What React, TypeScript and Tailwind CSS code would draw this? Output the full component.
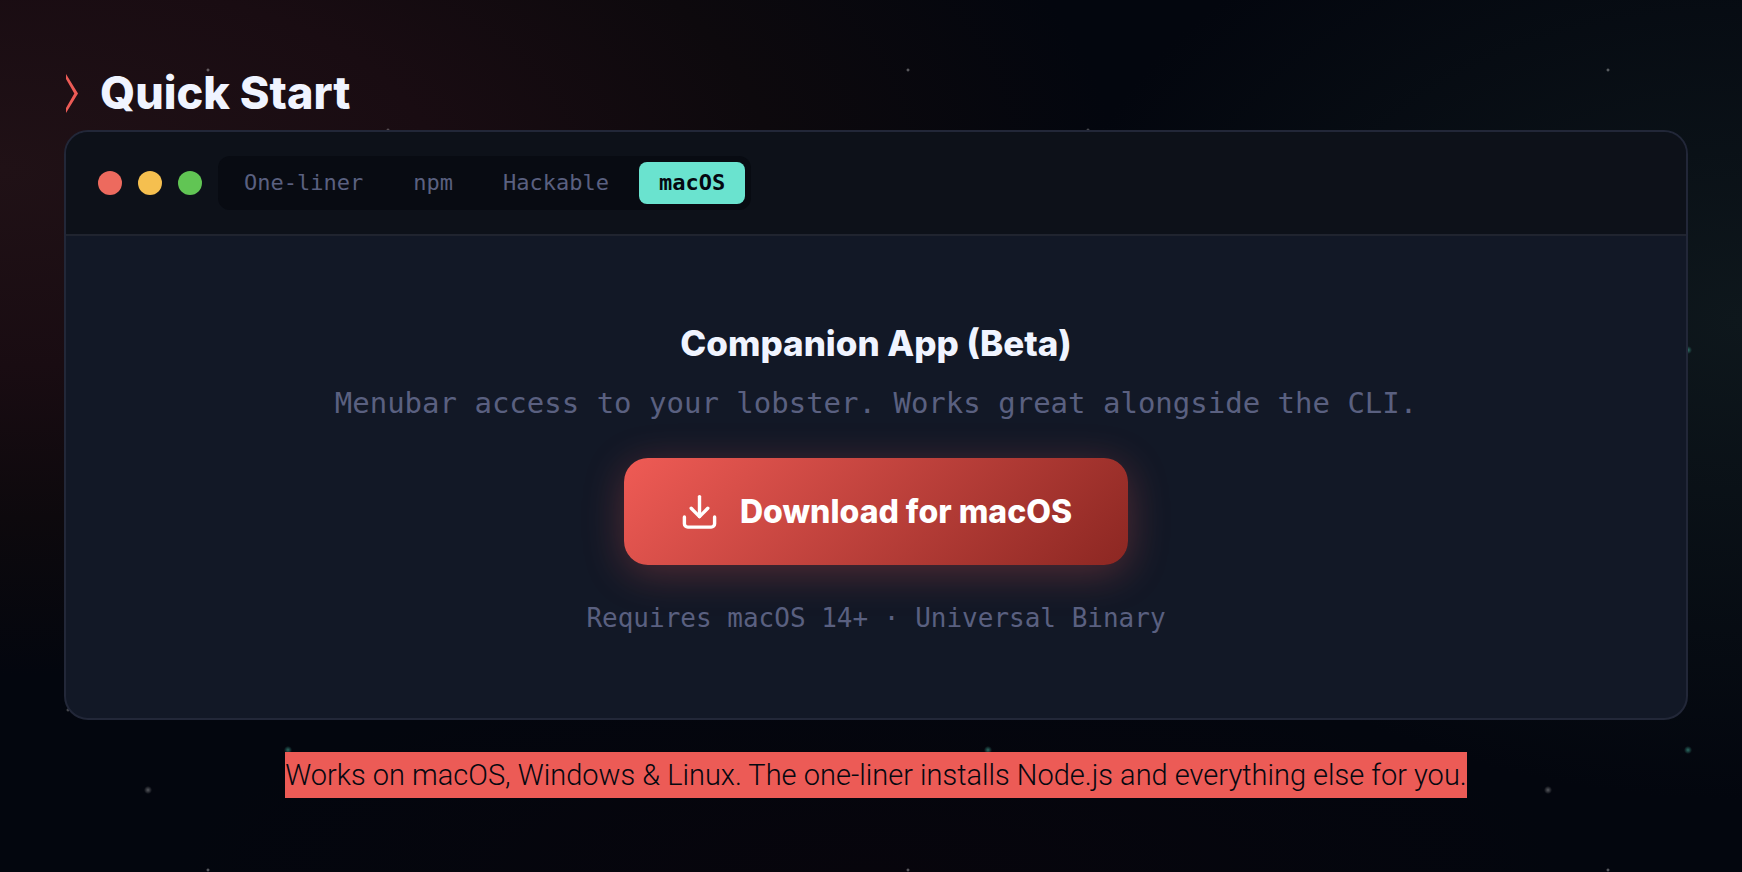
import { useState } from "react";

const tabs = ["One-liner", "npm", "Hackable", "macOS"];

function ChevronMark() {
  return (
    <svg aria-hidden="true" viewBox="0 0 14 40" className="h-10 w-[14px] shrink-0" fill="#ec5b56">
      <path d="M2 1L14 20.500L2 40V35L10.300 20.500L2 6Z" />
    </svg>
  );
}

function DownloadIcon() {
  return (
    <svg
      aria-hidden="true"
      viewBox="0 0 40 40"
      className="size-10 shrink-0"
      fill="none"
      stroke="currentColor"
      strokeWidth="3.4"
      strokeLinecap="round"
      strokeLinejoin="round"
    >
      <path d="M19.500 4.600v20" />
      <path d="M11.200 16.300l8.300 8.300 8.300-8.300" />
      <path d="M4.400 25v6.700a3.400 3.400 0 0 0 3.400 3.400h23.400a3.400 3.400 0 0 0 3.400-3.400v-6.700" />
    </svg>
  );
}

export default function App() {
  const [active, setActive] = useState("macOS");

  return (
    <main className="relative isolate min-h-screen overflow-hidden bg-[#03060e] pt-[69px] pr-[54px] pb-[72px] pl-16">
      <div
        aria-hidden="true"
        className="absolute inset-0 -z-10 bg-[radial-gradient(ellipse_1240px_560px_at_0px_170px,#201116_0%,#190c12_35%,#0d090d_62%,transparent_90%),radial-gradient(ellipse_700px_480px_at_100%_320px,#0e171c_0%,transparent_100%),radial-gradient(ellipse_700px_200px_at_50%_100%,#07050c_0%,transparent_100%)]"
      />
      <div
        aria-hidden="true"
        className="absolute inset-0 -z-10 bg-[length:700px_400px] bg-[image:radial-gradient(circle_at_208px_70px,#ffffff80,transparent_2px),radial-gradient(circle_at_388px_130px,#ffffff66,transparent_2px),radial-gradient(circle_at_288px_350px,#3f9d8caa,transparent_4px),radial-gradient(circle_at_68px_310px,#ffffff66,transparent_2px),radial-gradient(circle_at_148px_390px,#ffffff55,transparent_4px)]"
      />

      <section aria-labelledby="quick-start" className="flex flex-col">
        <h2
          id="quick-start"
          className="flex items-center gap-[22px] font-['Inter',sans-serif] text-[45px] leading-[48px] font-extrabold text-[#f0f4ff]"
        >
          <ChevronMark />
          Quick Start
        </h2>

        <div className="mt-[13px] overflow-hidden rounded-3xl border-2 border-[#222738] bg-[#121826]">
          <div className="flex items-center gap-4 border-b-2 border-[#20242f] bg-[#0d1119] px-8 py-6">
            <div className="flex gap-4" aria-hidden="true">
              <span className="size-6 rounded-full bg-[#ed6a5e]" />
              <span className="size-6 rounded-full bg-[#f5bf4f]" />
              <span className="size-6 rounded-full bg-[#61c554]" />
            </div>
            <div role="tablist" aria-label="Install method" className="flex gap-[10px] rounded-xl bg-[#080b12] p-[6px]">
              {tabs.map((tab) => (
                <button
                  key={tab}
                  type="button"
                  role="tab"
                  aria-selected={active === tab}
                  onClick={() => setActive(tab)}
                  className={
                    active === tab
                      ? "rounded-lg bg-[#6ae3cf] px-5 py-2 font-['DejaVu_Sans_Mono',monospace] text-[22px] leading-[26px] font-bold text-[#050810]"
                      : "rounded-lg px-5 py-2 font-['DejaVu_Sans_Mono',monospace] text-[22px] leading-[26px] text-[#5a6080]"
                  }
                >
                  {tab}
                </button>
              ))}
            </div>
          </div>

          <div className="flex flex-col items-center px-8 pt-20 pb-[79px] text-center">
            <h3 className="font-['Inter',sans-serif] text-[35px] leading-[54px] font-extrabold text-[#f0f4ff]">
              Companion App (Beta)
            </h3>
            <p className="mt-[10px] font-['DejaVu_Sans_Mono',monospace] text-[29px] leading-[46px] text-[#5a6080]">
              Menubar access to your lobster. Works great alongside the CLI.
            </p>
            <a
              href="#download"
              className="mt-8 flex items-center gap-5 rounded-3xl bg-[linear-gradient(135deg,#ef5b55_0%,#8c2722_100%)] px-14 py-7 font-['Inter',sans-serif] text-[32px] leading-[51px] font-extrabold text-white shadow-[0_8px_40px_#ec5b564d]"
            >
              <DownloadIcon />
              Download for macOS
            </a>
            <p className="mt-8 font-['DejaVu_Sans_Mono',monospace] text-[26px] leading-[42px] text-[#5a6080]">
              Requires macOS 14+ · Universal Binary
            </p>
          </div>
        </div>

        <p className="mt-8 text-center font-['Roboto',sans-serif] text-[29px] leading-[46px] font-light text-[#050810]">
          <mark className="inline-block bg-[#ec5b56] text-[#050810]">
            Works on macOS, Windows &amp; Linux. The one-liner installs Node.js and everything else for you.
          </mark>
        </p>
      </section>
    </main>
  );
}
